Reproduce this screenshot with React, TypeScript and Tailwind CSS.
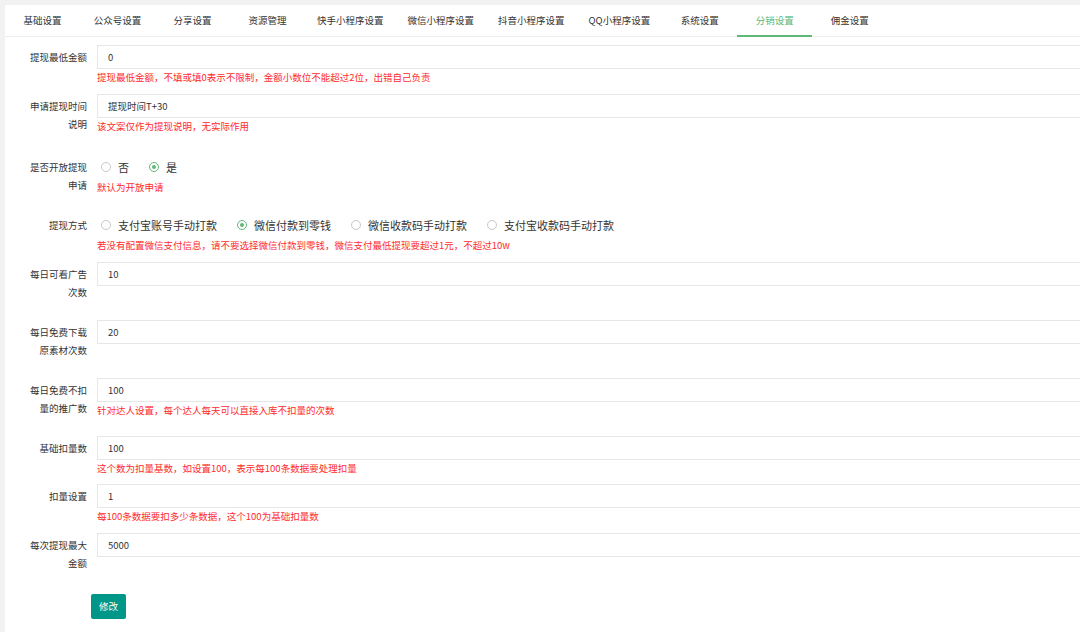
import React from 'react';

const tabs = [
  '基础设置',
  '公众号设置',
  '分享设置',
  '资源管理',
  '快手小程序设置',
  '微信小程序设置',
  '抖音小程序设置',
  'QQ小程序设置',
  '系统设置',
  '分销设置',
  '佣金设置',
];

const Radio: React.FC<{ label: string; checked?: boolean }> = ({ label, checked }) => (
  <span className="flex items-center ml-[4px] mr-[16px]">
    <span
      className={`flex h-[10px] w-[10px] items-center justify-center rounded-full border ${
        checked ? 'border-[#5FB878]' : 'border-[#c9c9c9]'
      }`}
    >
      {checked && <span className="h-[4px] w-[4px] rounded-full bg-[#5FB878]" />}
    </span>
    <span className="ml-[7px]">{label}</span>
  </span>
);

const Row: React.FC<{ label: string; className?: string; children: React.ReactNode }> = ({
  label,
  className = '',
  children,
}) => (
  <div className={`flex items-start ${className || 'mb-[9px]'}`}>
    <label className="w-[92px] shrink-0 pl-[22px] pr-[10px] pt-[3px] pb-[10px] text-right text-[9.5px] leading-[18px] text-[#333]">
      {label}
    </label>
    <div className="w-[1000px] shrink-0">{children}</div>
  </div>
);

const Field: React.FC<{ value: string }> = ({ value }) => (
  <input
    readOnly
    value={value}
    className="block h-[24px] w-full border border-[#e6e6e6] bg-white pl-[10px] text-[9.5px] text-[#333] outline-none"
  />
);

const Help: React.FC<{ children: React.ReactNode }> = ({ children }) => (
  <div className="text-[9.5px] leading-[16px] text-[#ff2b2b]">{children}</div>
);

export default function App() {
  return (
    <div className="min-h-[632px] w-full overflow-hidden bg-[#f2f2f2] pl-[5px] pt-[5px] font-['Noto_Sans_CJK_SC',sans-serif]">
      <div className="min-h-[627px] overflow-hidden bg-white">
        {/* tab bar */}
        <ul className="flex h-[32px] border-b border-[#eeeeee]">
          {tabs.map((t) => {
            const active = t === '分销设置';
            return (
              <li
                key={t}
                className={`relative flex min-w-[75px] items-center justify-center whitespace-nowrap px-[12px] text-[9.5px] ${
                  active ? 'text-[#5FB878]' : 'text-[#333]'
                }`}
              >
                {t}
                {active && <span className="absolute bottom-[-1px] left-0 right-0 h-[2px] bg-[#5FB878]" />}
              </li>
            );
          })}
        </ul>

        {/* form */}
        <div className="pt-[8px]">
          <Row label="提现最低金额">
            <Field value="0" />
            <Help>提现最低金额，不填或填0表示不限制，金额小数位不能超过2位，出错自己负责</Help>
          </Row>

          <Row label="申请提现时间说明" className="mb-[12px]">
            <Field value="提现时间T+30" />
            <Help>该文案仅作为提现说明，无实际作用</Help>
          </Row>

          <Row label="是否开放提现申请">
            <div className="flex h-[24px] items-center text-[11px] text-[#333]">
              <Radio label="否" />
              <Radio label="是" checked />
            </div>
            <Help>默认为开放申请</Help>
          </Row>

          <Row label="提现方式">
            <div className="flex h-[24px] items-center text-[11px] text-[#333]">
              <Radio label="支付宝账号手动打款" />
              <Radio label="微信付款到零钱" checked />
              <Radio label="微信收款码手动打款" />
              <Radio label="支付宝收款码手动打款" />
            </div>
            <Help>若没有配置微信支付信息，请不要选择微信付款到零钱，微信支付最低提现要超过1元，不超过10w</Help>
          </Row>

          <Row label="每日可看广告次数">
            <Field value="10" />
          </Row>

          <Row label="每日免费下载原素材次数">
            <Field value="20" />
          </Row>

          <Row label="每日免费不扣量的推广数">
            <Field value="100" />
            <Help>针对达人设置，每个达人每天可以直接入库不扣量的次数</Help>
          </Row>

          <Row label="基础扣量数" className="mb-[8px]">
            <Field value="100" />
            <Help>这个数为扣量基数，如设置100，表示每100条数据要处理扣量</Help>
          </Row>

          <Row label="扣量设置">
            <Field value="1" />
            <Help>每100条数据要扣多少条数据，这个100为基础扣量数</Help>
          </Row>

          <Row label="每次提现最大金额">
            <Field value="5000" />
          </Row>

          <div className="mt-[8px] pl-[86px]">
            <button className="h-[25px] w-[35px] rounded-[2px] bg-[#009688] text-[9.5px] text-white">修改</button>
          </div>
        </div>
      </div>
    </div>
  );
}
